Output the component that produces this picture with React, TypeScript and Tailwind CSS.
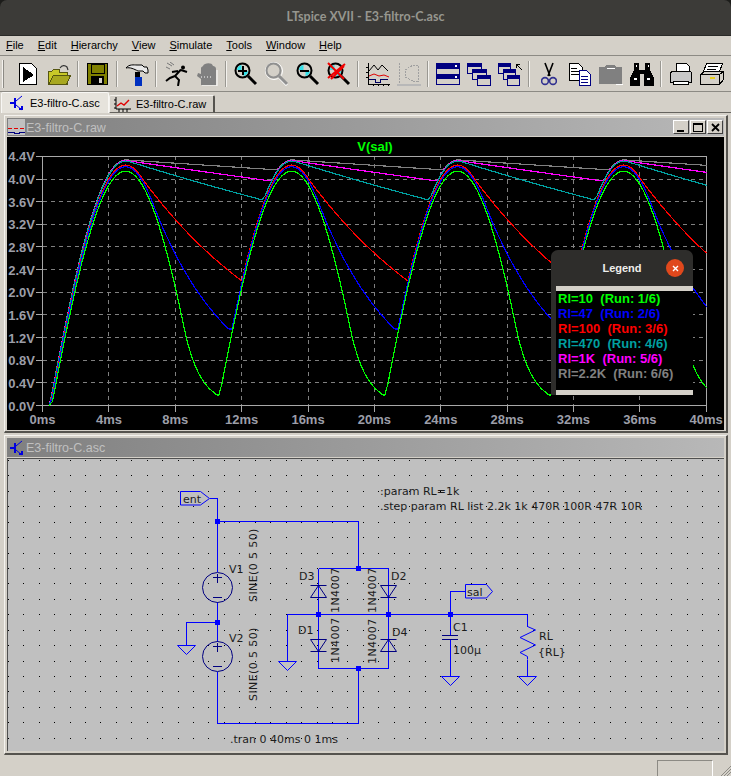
import React from 'react';

const SANS = "font-['Liberation_Sans',sans-serif]";

// capacitor discharge model of the rectifier, one trace per step of RL
function trace(rc: number, vd: number) {
	const dt = 0.2;
	const pts: string[] = [];
	let v = 0;
	for (let t = 0; t <= 40.001; t += dt) {
		const s = 5 * Math.abs(Math.sin(0.314159 * t)) - vd;
		v = Math.max(s, v * Math.exp(-dt / rc), 0);
		if (t < 0.4) continue;
		pts.push(`${(42.6 + t * 16.6).toFixed(1)},${(405.5 - v * 56.6).toFixed(1)}`);
	}
	return pts.join(' ');
}

const RUNS = [
	{ name: 'Rl=2.2K', run: '(Run: 6/6)', color: '#808080', rc: 220, vd: 0.66 },
	{ name: 'Rl=1K', run: '(Run: 5/6)', color: '#ff00ff', rc: 100, vd: 0.67 },
	{ name: 'Rl=470', run: '(Run: 4/6)', color: '#00a0a0', rc: 47, vd: 0.68 },
	{ name: 'Rl=100', run: '(Run: 3/6)', color: '#ff0000', rc: 10, vd: 0.75 },
	{ name: 'Rl=47', run: '(Run: 2/6)', color: '#0000ff', rc: 4.7, vd: 0.78 },
	{ name: 'Rl=10', run: '(Run: 1/6)', color: '#00ff00', rc: 1, vd: 0.86 },
];

const Y_LABELS = ['0.0V', '0.4V', '0.8V', '1.2V', '1.6V', '2.0V', '2.4V', '2.8V', '3.2V', '3.6V', '4.0V', '4.4V'];
const X_LABELS = ['0ms', '4ms', '8ms', '12ms', '16ms', '20ms', '24ms', '28ms', '32ms', '36ms', '40ms'];

function Btn({ children }: { children: React.ReactNode }) {
	return <div className="w-[31px] h-[26px] flex items-center justify-center shrink-0">{children}</div>;
}

function Sep() {
	return (
		<div className="w-[8px] h-[26px] flex justify-center shrink-0">
			<div className="w-[2px] h-full bg-[#9a9892] border-r border-[#f4f2ee]" />
		</div>
	);
}

function Icon({ children, w = 24 }: { children: React.ReactNode; w?: number }) {
	return (
		<svg width={w} height={24} viewBox={`0 0 ${w} 24`} fill="none" shapeRendering="crispEdges">
			{children}
		</svg>
	);
}

function Lens({ c = '#000', children }: { c?: string; children?: React.ReactNode }) {
	const live = c === '#000';
	return (
		<Icon>
			{!live && <circle cx="9" cy="9" r="8.5" stroke="#fff" shapeRendering="auto" />}
			{!live && <path d="M15 16l7 7" stroke="#fff" strokeWidth="3" shapeRendering="auto" />}
			<circle cx="8.5" cy="8.5" r="7" fill="#d4d0c8" stroke={c} strokeWidth="2" shapeRendering="auto" />
			{live && <path d="M3 8a5.5 5.5 0 0 1 4.5-5v5z" fill="#33e0e8" shapeRendering="auto" />}
			{live && <path d="M14 9a5.5 5.5 0 0 1-4.5 5v-5z" fill="#33e0e8" shapeRendering="auto" />}
			<path d="M14 14l8 8" stroke={c} strokeWidth="3" shapeRendering="auto" />
			{children}
		</Icon>
	);
}

function Windows({ x, y, w = 16, h = 10 }: { x: number; y: number; w?: number; h?: number }) {
	return (
		<g>
			<rect x={x + 0.5} y={y + 0.5} width={w} height={h} fill="#d4d0c8" stroke="#000080" />
			<rect x={x} y={y} width={w + 1} height="4" fill="#000080" />
		</g>
	);
}

function Toolbar() {
	return (
		<div className="h-[36px] shrink-0 flex items-center pl-[2px] border-b border-[#8c8a84]">
			<div className="w-[2px] h-[28px] bg-[#f4f2ee] border-r border-[#8c8a84] mr-[8px]" />
			<Btn>
				<Icon>
					<path d="M3.5 1.5h12l5 5v16h-17z" fill="#fff" stroke="#000" />
					<path d="M7 5l11 8-11 7z" fill="#000" />
				</Icon>
			</Btn>
			<Btn>
				<Icon>
					<path d="M1.5 9.5h3l2-2h6v3h8v12h-19z" fill="#c8c828" stroke="#555510" />
					<path d="M1.5 22.5l5-9h17l-4 9z" fill="#a8a820" stroke="#555510" />
					<path d="M13 6c2-3 5-3 7-1l1 3" stroke="#333" strokeWidth="1.2" shapeRendering="auto" />
				</Icon>
			</Btn>
			<Sep />
			<Btn>
				<Icon>
					<rect x="1.5" y="1.5" width="20" height="21" fill="#808000" stroke="#000" />
					<rect x="5" y="2" width="13" height="9" fill="#808000" stroke="#000" />
					<rect x="5" y="14" width="13" height="8" fill="#000" />
					<rect x="13" y="16" width="3" height="5" fill="#d4d0c8" />
				</Icon>
			</Btn>
			<Sep />
			<Btn>
				<svg width="24" height="24" viewBox="0 0 24 24" fill="none">
					<path d="M1 6C4 2 9 3 12 3h5l2 2h3l1 3v3h-3l-2-2h-5C9 7 5 5 1 6z" fill="#e8e8e8" stroke="#000" />
					<rect x="10" y="10" width="5" height="5" fill="#000" />
					<rect x="10" y="15" width="7" height="9" fill="#0030c0" />
				</svg>
			</Btn>
			<Sep />
			<Btn>
				<svg width="24" height="24" viewBox="0 0 24 24" fill="none">
					<circle cx="19" cy="5.5" r="2" fill="#000" />
					<path d="M17 7.5L11 14l4 4-1 6M11 14l-5 2-4 3M17 8l6 2M14 9l-6 1" stroke="#000" strokeWidth="2" />
					<path d="M3 1l5 3M6 0l4 3M2 5l4 2" stroke="#777" />
				</svg>
			</Btn>
			<Btn>
				<svg width="22" height="24" viewBox="0 0 22 24" fill="none">
					<path d="M5 23V6c0-1 2-2 2-2 1-3 9-4 10 0 0 0 3 0 3 3v16z" fill="#808080" />
					<path d="M5 17l-4-3 1-3 3 1z" fill="#808080" />
					<path d="M5 15h10" stroke="#fff" strokeDasharray="1 2" />
					<path d="M21 8v16H6" stroke="#fff" />
				</svg>
			</Btn>
			<Sep />
			<Btn>
				<Lens>
					<path d="M8.5 4v9M4 8.5h9" stroke="#000" strokeWidth="2" />
				</Lens>
			</Btn>
			<Btn>
				<Lens c="#909090" />
			</Btn>
			<Btn>
				<Lens>
					<path d="M4 8.5h9" stroke="#000" strokeWidth="2" />
				</Lens>
			</Btn>
			<Btn>
				<Lens>
					<path d="M1 1l16 16M18 2L1 16M4 17L17 4" stroke="#f00000" strokeWidth="2" shapeRendering="auto" />
				</Lens>
			</Btn>
			<Sep />
			<Btn>
				<Icon>
					<path d="M2 1v21h22" stroke="#000" />
					<path d="M0 5h2M0 10h2M0 15h2M7 22v2M12 22v2M17 22v2M22 22v2" stroke="#000" />
					<path d="M3 9l5-6 4 5 4-5 6 6" stroke="#000" shapeRendering="auto" />
					<path d="M3 14l5-2 5 2 5-1 5 2" stroke="#e00000" shapeRendering="auto" />
					<path d="M3 17h6v3h5v-3h8" stroke="#000060" />
				</Icon>
			</Btn>
			<Btn>
				<Icon>
					<path d="M2 1v21h22" stroke="#a0a0a0" strokeDasharray="2 1" />
					<path d="M8 8l8-5h5v16h-5l-8-4z" stroke="#a0a0a0" strokeDasharray="2 1" />
					<path d="M0 22h24v2H0z" fill="#b8b8b8" />
				</Icon>
			</Btn>
			<Sep />
			<Btn>
				<Icon>
					<rect x="0.5" y="1.5" width="23" height="21" fill="#d4d0c8" stroke="#000080" />
					<rect x="0" y="1" width="24" height="6" fill="#000080" />
					<rect x="0" y="12" width="24" height="5" fill="#000080" />
					<path d="M19 3h2v2h-2zM19 14h2v2h-2z" fill="#fff" />
				</Icon>
			</Btn>
			<Btn>
				<Icon>
					<Windows x={0} y={1} w={14} />
					<Windows x={5} y={7} w={14} />
					<Windows x={10} y={13} w={13} />
				</Icon>
			</Btn>
			<Btn>
				<Icon>
					<Windows x={0} y={1} w={12} />
					<Windows x={5} y={7} w={12} />
					<Windows x={9} y={13} w={12} />
					<path d="M18 2h4M18 2v4M18 2l6 6" stroke="#000" />
				</Icon>
			</Btn>
			<Sep />
			<Btn>
				<svg width="16" height="24" viewBox="0 0 16 24" fill="none">
					<path d="M4 1l5 13M12 1L7 14" stroke="#000" strokeWidth="1.6" />
					<circle cx="4" cy="19" r="3.4" stroke="#303090" strokeWidth="1.6" />
					<circle cx="12" cy="19" r="3.4" stroke="#303090" strokeWidth="1.6" />
				</svg>
			</Btn>
			<Btn>
				<Icon>
					<path d="M1.5 1.5h9l4 4v13h-13z" fill="#fff" stroke="#000" />
					<path d="M3 6h6M3 9h8M3 12h8" stroke="#000" />
					<path d="M11.5 8.5h7l4 4v11h-11z" fill="#fff" stroke="#000080" />
					<path d="M13 14h7M13 17h7M13 20h7" stroke="#000080" />
				</Icon>
			</Btn>
			<Btn>
				<Icon>
					<path d="M0 5h6l1-2h9l1 2h6l0 17H0z" fill="#808080" />
					<path d="M8 6h8" stroke="#fff" />
					<path d="M17 22h7v-7" stroke="#fff" />
				</Icon>
			</Btn>
			<Btn>
				<Icon>
					<path d="M4 1h5v7h6V1h5v7l4 8v8H14V12h-4v12H0v-8l4-8z" fill="#000" />
					<path d="M4 17h3M17 17h3M6 4h1M18 4h1" stroke="#fff" strokeWidth="2" />
				</Icon>
			</Btn>
			<Sep />
			<Btn>
				<Icon>
					<path d="M7.5 1.5h10l3 3v6h-13z" fill="#fff" stroke="#000" />
					<path d="M1.5 12c0-2 2-3 4-3h14c2 0 3 1 3 3v8h-21z" fill="#c8c8c8" stroke="#000" />
					<path d="M4.5 19.5h15v3h-15z" fill="#fff" stroke="#000" />
				</Icon>
			</Btn>
			<Btn>
				<Icon>
					<path d="M6.5 1.5h16l-3 8h-16z" fill="#fff" stroke="#000" />
					<path d="M8 4h10M7 7h9" stroke="#000" />
					<path d="M0.5 12.5l4-3h19v8l-4 5h-19z" fill="#d4d0c8" stroke="#000" />
					<path d="M0.5 12.5h19v10M19.5 12.5l4-3" stroke="#000" />
					<path d="M10 16h5" stroke="#e8d020" strokeWidth="2" />
				</Icon>
			</Btn>
		</div>
	);
}

function TransistorIcon() {
	return (
		<svg width="14" height="16" viewBox="0 0 14 16" fill="none" stroke="#0000e0">
			<path d="M0 8h5M5 3v10" strokeWidth="2" />
			<path d="M6 6l6-5M6 10l6 5" />
			<path d="M9 14h3v-3" strokeWidth="2" />
		</svg>
	);
}

function PlotIcon() {
	return (
		<svg width="17" height="15" viewBox="0 0 17 15" fill="none">
			<path d="M2 0v12h15M0 3h2M0 7h2M0 11h2M5 12v3M9 12v3M13 12v3" stroke="#000" />
			<path d="M3 9l4-3 3 2 5-5" stroke="#e00000" strokeWidth="1.4" />
		</svg>
	);
}

function Tabs() {
	return (
		<div className={`h-[21px] shrink-0 flex items-end pl-[1px] ${SANS}`}>
			<div className="w-[108px] h-[21px] flex items-center gap-[6px] pl-[8px] bg-[#e6e3dc] border-t border-l border-r border-[#f8f7f4] rounded-t-[2px]">
				<TransistorIcon />
				<span className="text-[11px] text-black whitespace-nowrap">E3-filtro-C.asc</span>
			</div>
			<div className="w-[106px] h-[18px] flex items-center gap-[5px] pl-[4px] bg-[#d4d0c8] border-t border-r-2 border-l border-[#f4f2ee] border-r-[#55534e] border-b border-b-[#66645f] rounded-t-[2px]">
				<PlotIcon />
				<span className="text-[11px] text-black whitespace-nowrap">E3-filtro-C.raw</span>
			</div>
			<div className="flex-1 border-b border-[#66645f]" />
		</div>
	);
}

function WinButtons() {
	return (
		<div className="flex gap-[1px] pr-[1px]">
			{['min', 'max', 'close'].map((k) => (
				<div
					key={k}
					className="w-[16px] h-[14px] bg-[#d4d0c8] border border-t-white border-l-white border-r-[#404040] border-b-[#404040] flex items-center justify-center"
				>
					{k === 'min' && <div className="w-[7px] h-[2px] bg-black mt-[7px] mr-[2px]" />}
					{k === 'max' && <div className="w-[10px] h-[9px] border border-black border-t-2" />}
					{k === 'close' && (
						<svg width="9" height="9" viewBox="0 0 9 9" stroke="#000" strokeWidth="1.8">
							<path d="M1 1l7 7M8 1L1 8" />
						</svg>
					)}
				</div>
			))}
		</div>
	);
}

function Window({
	title,
	icon,
	buttons,
	children,
	className,
	barClass,
}: {
	title: string;
	icon: React.ReactNode;
	buttons?: boolean;
	children: React.ReactNode;
	className: string;
	barClass: string;
}) {
	return (
		<div className={`flex flex-col p-[2px] bg-[#d4d0c8] border-l border-t border-[#f4f2ee] border-r-2 border-b-2 border-r-[#55534e] border-b-[#55534e] ${className}`}>
			<div className={`shrink-0 flex items-center justify-between bg-gradient-to-r from-[#808080] to-[#b8b8b8] ${barClass} ${SANS}`}>
				<div className="flex items-center gap-[1px] pl-[1px]">
					<div className="w-[17px] flex justify-center">{icon}</div>
					<span className="text-[12.5px] text-[#c0c0c0] pt-[2px]">{title}</span>
				</div>
				{buttons && <WinButtons />}
			</div>
			{children}
		</div>
	);
}

function Legend() {
	return (
		<div className="absolute left-[544px] top-[113px] w-[142px] h-[145px] flex flex-col bg-[#2e2d2b] rounded-t-[7px]">
			<div className="h-[36px] flex items-center justify-center relative shrink-0">
				<span className={`text-[11px] font-bold text-[#eeeeec] ${SANS}`}>Legend</span>
				<div className="absolute right-[9px] top-[9px] w-[18px] h-[18px] rounded-full bg-[#e0481c] flex items-center justify-center">
					<svg width="7" height="7" viewBox="0 0 7 7" stroke="#fff" strokeWidth="1.4">
						<path d="M1 1l5 5M6 1L1 6" />
					</svg>
				</div>
			</div>
			<div className="ml-[5px] flex-1 flex flex-col bg-[#d4d0c8] py-[5px]">
				<div className={`flex-1 bg-black pl-[2px] pt-0 text-[13px] font-bold leading-[15px] ${SANS}`}>
					{[...RUNS].reverse().map((r) => (
						<div key={r.name} className="whitespace-pre" style={{ color: r.color }}>
							{r.name}  {r.run}
						</div>
					))}
				</div>
			</div>
		</div>
	);
}

function Plot() {
	const xs = X_LABELS.map((_, i) => 42.6 + i * 66.36);
	const ys = Y_LABELS.map((_, i) => 405.5 - i * 22.65);
	return (
		<div className="relative flex-1 mt-[1px] bg-black">
			<svg width="717" height="293" viewBox="7 137 717 293" fill="none" className="block">
				{xs.slice(1, -1).map((x) => (
					<line key={x} x1={x} x2={x} y1={156} y2={405} stroke="#808080" strokeDasharray="4 4" shapeRendering="crispEdges" />
				))}
				{ys.slice(1, -1).map((y) => (
					<line key={y} x1={43} x2={706} y1={y} y2={y} stroke="#808080" strokeDasharray="4 4" shapeRendering="crispEdges" />
				))}
				<rect x={42.5} y={156.5} width={664} height={249} stroke="#a8a8a8" shapeRendering="crispEdges" />
				{xs.map((x) => (
					<line key={x} x1={x} x2={x} y1={405} y2={412} stroke="#a8a8a8" shapeRendering="crispEdges" />
				))}
				{ys.map((y) => (
					<line key={y} x1={36} x2={42} y1={y} y2={y} stroke="#a8a8a8" shapeRendering="crispEdges" />
				))}
				{Y_LABELS.map((l, i) => (
					<text key={l} x={35} y={ys[i] + 5} textAnchor="end" className={`text-[13px] font-bold fill-[#9c9ea8] ${SANS}`}>
						{l}
					</text>
				))}
				{X_LABELS.map((l, i) => (
					<text key={l} x={xs[i]} y={424} textAnchor="middle" className={`text-[13px] font-bold fill-[#9c9ea8] ${SANS}`}>
						{l}
					</text>
				))}
				<text x={375} y={151} textAnchor="middle" className={`text-[13px] font-bold fill-[#00ff00] ${SANS}`}>
					V(sal)
				</text>
				{RUNS.map((r) => (
					<polyline key={r.name} points={trace(r.rc, r.vd)} stroke={r.color} strokeWidth="1.2" shapeRendering="crispEdges" />
				))}
			</svg>
			<Legend />
		</div>
	);
}

const W = '#0000ff';
const Wire = ({ d }: { d: string }) => <path d={d} stroke={W} strokeWidth="1" fill="none" shapeRendering="crispEdges" />;
const Dot = ({ x, y }: { x: number; y: number }) => <rect x={x - 2.5} y={y - 2.5} width="5" height="5" fill={W} shapeRendering="crispEdges" />;
const Gnd = ({ x, y }: { x: number; y: number }) => <path d={`M${x - 9} ${y}h18l-9 9z`} stroke={W} fill="none" />;

const DOTS_X = Array.from({ length: 47 }, (_, i) => Math.round(7.9 + i * 15.43));
const DOTS_Y = Array.from({ length: 20 }, (_, i) => Math.round(460 + i * 15.43));

function Label({ x, y, t, rot }: { x: number; y: number; t: string; rot?: boolean }) {
	return (
		<text
			x={x}
			y={y}
			transform={rot ? `rotate(-90 ${x} ${y})` : undefined}
			className={`text-[11px] fill-[#1c1c1c] font-['DejaVu_Sans',sans-serif] ${rot ? 'tracking-[0.4px]' : ''}`}
		>
			{t}
		</text>
	);
}

function Source({ y }: { y: number }) {
	return (
		<g stroke="#000080" fill="none">
			<circle cx={217.5} cy={y} r={15} />
			<path d={`M213 ${y - 10}h9M217.5 ${y - 14}v9M213 ${y + 10}h9`} shapeRendering="crispEdges" />
		</g>
	);
}

function DiodeDown({ x, y }: { x: number; y: number }) {
	return <path d={`M${x - 8} ${y}h16l-8 12zM${x - 8} ${y + 12}h16`} stroke="#000080" fill="none" />;
}

function DiodeUp({ x, y }: { x: number; y: number }) {
	return <path d={`M${x - 8} ${y + 12}h16l-8 -12zM${x - 8} ${y}h16`} stroke="#000080" fill="none" />;
}

function Schematic() {
	return (
		<div className="flex-1 mt-[1px] bg-[#c0c0c0] border-t border-l border-[#505050] overflow-hidden">
			<svg width="716" height="292" viewBox="8 459 716 292" fill="none" className="block">
				{DOTS_Y.map((y) =>
					DOTS_X.map((x) => <rect key={`${x}-${y}`} x={x} y={y} width="1" height="1" fill="#000" />)
				)}
				<Wire d="M209.5 498.5h8v73.5M217.5 521.5h140.5v47M318.5 568.5h70v46M318.5 568.5v46M287.5 661.5v-47h101M318.5 614.5v54h70v-54M358.5 668.5v55h-141v-52M217.5 602v40M217.5 622.5h-31v23M450.5 614.5v-23h15M388.5 614.5h139v12M450.5 614.5v21M450.5 640v37M527.5 660v17" />
				<path d="M527.5 626.5l8 3.5-15.5 7.5 15.5 7.5-15.5 7.5 7.5 4v3" stroke={W} fill="none" />
				<path d="M442 635.5h16M442 639.5h16" stroke="#000080" shapeRendering="crispEdges" />
				<path d="M180.5 491.5h20l9 7-9 6.5h-20z" stroke={W} fill="#c0c0c0" />
				<path d="M465.5 584.5h21l6 7-6 6.5h-21z" stroke={W} fill="#c0c0c0" />
				<Source y={587.5} />
				<Source y={656.5} />
				<DiodeUp x={318.5} y={585.5} />
				<DiodeDown x={318.5} y={639.5} />
				<DiodeDown x={388.5} y={585.5} />
				<DiodeUp x={388.5} y={639.5} />
				<Gnd x={186.5} y={645.5} />
				<Gnd x={287.5} y={661.5} />
				<Gnd x={450.5} y={676.5} />
				<Gnd x={527.5} y={676.5} />
				<Dot x={217.5} y={521.5} />
				<Dot x={217.5} y={622.5} />
				<Dot x={358} y={568.5} />
				<Dot x={358} y={668.5} />
				<Dot x={318.5} y={614.5} />
				<Dot x={388.5} y={614.5} />
				<Dot x={450.5} y={614.5} />
				<Label x={183} y={503} t="ent" />
				<Label x={467} y={596} t="sal" />
				<Label x={229} y={573} t="V1" />
				<Label x={229} y={642} t="V2" />
				<Label x={299} y={580} t="D3" />
				<Label x={298} y={634} t="D1" />
				<Label x={391} y={580} t="D2" />
				<Label x={392} y={636} t="D4" />
				<Label x={453} y={631} t="C1" />
				<Label x={453} y={654} t="100µ" />
				<Label x={539} y={640} t="RL" />
				<Label x={538} y={656} t="{RL}" />
				<Label x={257} y={602} t="SINE(0 5 50)" rot />
				<Label x={257} y={701} t="SINE(0 5 50)" rot />
				<Label x={339} y={613} t="1N4007" rot />
				<Label x={339} y={663} t="1N4007" rot />
				<Label x={376} y={613} t="1N4007" rot />
				<Label x={376} y={664} t="1N4007" rot />
				<Label x={380} y={495} t=":param RL=1k" />
				<Label x={380} y={510} t=".step param RL list 2.2k 1k 470R 100R 47R 10R" />
				<Label x={230} y={743} t=".tran 0 40ms 0 1ms" />
			</svg>
		</div>
	);
}

export default function App() {
	const menus = ['File', 'Edit', 'Hierarchy', 'View', 'Simulate', 'Tools', 'Window', 'Help'];
	return (
		<div className={`w-[731px] h-[776px] flex flex-col overflow-hidden bg-[#1c1c1a] ${SANS}`}>
			<div className="h-[36px] shrink-0 flex items-center justify-center bg-[#3c3b38] rounded-t-[7px] border-b border-[#2a2a28]">
				<span className="text-[12.5px] font-bold text-[#96968f] font-['Lato',sans-serif]">
					LTspice XVII - E3-filtro-C.asc
				</span>
			</div>
			<div className="flex-1 flex flex-col bg-[#d4d0c8] min-h-0">
				<div className="h-[20px] shrink-0 flex items-center gap-[14px] pl-[6px] border-b border-[#8c8a84] text-[11px] text-black">
					{menus.map((m) => (
						<span key={m}>
							<span className="underline">{m[0]}</span>
							{m.slice(1)}
						</span>
					))}
				</div>
				<Toolbar />
				<Tabs />
				<div className="flex-1 flex flex-col gap-[2px] pl-[4px] pr-[3px] pt-[2px] min-h-0">
					<Window title="E3-filtro-C.raw" buttons className="h-[318px]" barClass="h-[18px]" icon={
						<svg width="17" height="16" viewBox="0 0 17 16" fill="none" shapeRendering="crispEdges">
							<rect width="17" height="16" fill="#c0c0c0" />
							<path d="M0 9h4M6 9h4M12 9h4" stroke="#e00000" />
							<path d="M0 13h6v1h5v-1h6" stroke="#000080" />
						</svg>
					}>
						<Plot />
					</Window>
					<Window title="E3-filtro-C.asc" className="h-[320px]" barClass="h-[19px]" icon={<TransistorIcon />}>
						<Schematic />
					</Window>
				</div>
				<div className="h-[21px] shrink-0 flex justify-end items-end pr-[18px] relative">
					<div className="w-[56px] h-[16px] border-l border-t border-[#8c8a84] border-r border-r-white" />
					<svg width="11" height="11" viewBox="0 0 11 11" className="absolute right-0 bottom-0" stroke="#8c8a84">
						<path d="M11 1L1 11M11 4L4 11M11 7L7 11" />
					</svg>
				</div>
			</div>
		</div>
	);
}
